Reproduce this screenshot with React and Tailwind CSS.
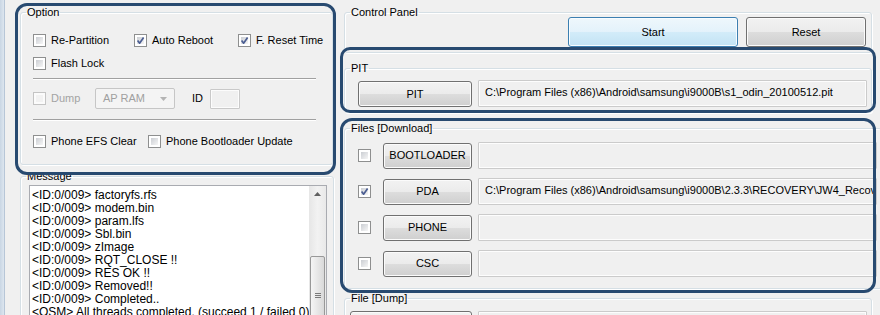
import React from "react";

function Cb({ checked, disabled }) {
  return (
    <span
      className={
        disabled
          ? "relative inline-block w-[13px] h-[13px] shrink-0 border border-[#c4c4c4] bg-[#fbfbfb]"
          : "relative inline-block w-[13px] h-[13px] shrink-0 border border-[#8e8f8f] bg-white"
      }
    >
      <span
        className={
          disabled
            ? "absolute inset-[2px] bg-[#f2f2f2]"
            : "absolute inset-[2px] bg-gradient-to-br from-[#cbced3] to-[#f6f6f6]"
        }
      />
      {checked && (
        <svg className="absolute left-0 top-0" width="11" height="11" viewBox="0 0 11 11">
          <path d="M2.6 5.6 L4.6 8.2 L8.6 2.4" fill="none" stroke="#4b5e92" strokeWidth="1.7" strokeLinejoin="round" />
        </svg>
      )}
    </span>
  );
}

function Check({ label, checked, disabled, className }) {
  return (
    <div className={"flex items-center gap-[5px] " + (className || "")}>
      <Cb checked={checked} disabled={disabled} />
      <span className={disabled ? "text-[#a3a3a3]" : "text-black"}>{label}</span>
    </div>
  );
}

function Btn({ label, className }) {
  return (
    <div
      className={
        "flex items-center justify-center rounded-[3px] border border-[#707070] bg-[linear-gradient(#f2f2f2_0%,#ebebeb_50%,#dddddd_50%,#cfcfcf_100%)] shadow-[inset_0_0_0_1px_#fbfbfb] " +
        (className || "")
      }
    >
      {label}
    </div>
  );
}

function PathBox({ text, className }) {
  return (
    <div
      className={
        "h-[27px] flex-1 rounded-[1px] border border-[#cbcbcb] bg-[#f0f0f0] shadow-[inset_0_0_0_1px_#fdfdfd] pl-[6px] pt-[3px] whitespace-nowrap overflow-hidden " +
        (className || "")
      }
    >
      {text}
    </div>
  );
}

const fs = "border border-[#d5dfe5] rounded-[3px] shadow-[inset_1px_1px_0_#ffffff,1px_1px_0_#ffffff]";
const lg = "ml-[5px] px-[1px] leading-[13px]";

const messages = [
  "<ID:0/009> factoryfs.rfs",
  "<ID:0/009> modem.bin",
  "<ID:0/009> param.lfs",
  "<ID:0/009> Sbl.bin",
  "<ID:0/009> zImage",
  "<ID:0/009> RQT_CLOSE !!",
  "<ID:0/009> RES OK !!",
  "<ID:0/009> Removed!!",
  "<ID:0/009> Completed..",
  "<OSM> All threads completed. (succeed 1 / failed 0)",
];

const files = [
  { label: "BOOTLOADER", checked: false, path: "" },
  { label: "PDA", checked: true, path: "C:\\Program Files (x86)\\Android\\samsung\\i9000B\\2.3.3\\RECOVERY\\JW4_Recov" },
  { label: "PHONE", checked: false, path: "" },
  { label: "CSC", checked: false, path: "" },
];

export default function App() {
  return (
    <div className="relative w-[880px] h-[315px] overflow-hidden bg-[#f0f0f0] flex text-[11px] text-black font-[family-name:'Liberation_Sans',Arial,sans-serif]">
      {/* window edge */}
      <div className="w-[5px] h-full shrink-0 bg-gradient-to-r from-[#c9d6e4] to-[#dde6ef] border-r border-[#b7c6d7]" />

      {/* left column */}
      <div className="ml-[15px] w-[313px] shrink-0 flex flex-col">
        <fieldset className={"mt-[6px] h-[159px] shrink-0 " + fs}>
          <legend className={lg}>Option</legend>
          <div className="mt-[13px] ml-[12px] flex items-center h-[16px]">
            <Check label="Re-Partition" className="w-[101px]" />
            <Check label="Auto Reboot" checked className="w-[104px]" />
            <Check label="F. Reset Time" checked />
          </div>
          <div className="mt-[7px] ml-[12px] flex items-center h-[16px]">
            <Check label="Flash Lock" />
          </div>
          <div className="mt-[7px] ml-[12px] w-[283px] border-t border-b border-t-[#a0a0a0] border-b-white" />
          <div className="mt-[8px] ml-[12px] flex items-center h-[21px]">
            <Check label="Dump" disabled className="w-[62px]" />
            <div className="w-[80px] h-[21px] rounded-[2px] border border-[#c6c6c6] bg-[#f4f4f4] flex items-center pl-[7px] text-[#a0a0a0]">
              <span className="flex-1">AP RAM</span>
              <svg className="mr-[7px]" width="7" height="4" viewBox="0 0 7 4">
                <path d="M0 0 L7 0 L3.5 4 Z" fill="#b4b4b4" />
              </svg>
            </div>
            <span className="ml-[17px]">ID</span>
            <div className="ml-[7px] w-[30px] h-[20px] rounded-[1px] border border-[#c9c9c9] bg-[#f0f0f0] shadow-[inset_0_0_0_1px_#fcfcfc]" />
          </div>
          <div className="mt-[10px] ml-[12px] w-[283px] border-t border-b border-t-[#a0a0a0] border-b-white" />
          <div className="mt-[12px] ml-[12px] flex items-center h-[16px]">
            <Check label="Phone EFS Clear" className="w-[115px]" />
            <Check label="Phone Bootloader Update" />
          </div>
        </fieldset>

        <fieldset className={"mt-[5px] h-[200px] shrink-0 " + fs}>
          <legend className={lg}>Message</legend>
          <div className="mt-[2px] ml-[8px] mr-[6px] h-[150px] border border-[#a9abb1] bg-white flex">
            <div className="flex-1 pl-[2px] pt-[3px] text-[12px] leading-[13px] whitespace-nowrap overflow-hidden">
              {messages.map((m, i) => (
                <div key={i}>{m}</div>
              ))}
            </div>
            <div className="w-[17px] shrink-0 bg-gradient-to-r from-[#e6e6e6] via-[#f2f2f2] to-[#e9e9e9] flex flex-col">
              <div className="h-[17px] flex items-center justify-center">
                <svg width="7" height="4" viewBox="0 0 7 4">
                  <path d="M3.5 0 L7 4 L0 4 Z" fill="#606060" />
                </svg>
              </div>
              <div className="mt-[54px] ml-[1px] w-[15px] h-[80px] rounded-[2px] border border-[#989898] bg-gradient-to-r from-[#f5f5f5] to-[#d9d9d9] flex flex-col items-center">
                <div className="mt-[36px] flex flex-col gap-[1px]">
                  <div className="w-[6px] h-[1px] bg-[#7a7a7a]" />
                  <div className="w-[6px] h-[1px] bg-[#7a7a7a]" />
                  <div className="w-[6px] h-[1px] bg-[#7a7a7a]" />
                </div>
              </div>
            </div>
          </div>
        </fieldset>
      </div>

      {/* right column */}
      <div className="ml-[11px] w-[528px] shrink-0 flex flex-col">
        <fieldset className={"mt-[6px] h-[47px] shrink-0 " + fs}>
          <legend className={lg}>Control Panel</legend>
          <div className="-mt-[2px] flex justify-end gap-[8px] pr-[5px]">
            <div className="w-[170px] h-[30px] flex items-center justify-center rounded-[3px] border border-[#3c7fb1] bg-[linear-gradient(#eef7fc_0%,#e3f2fb_50%,#d3ecf9_50%,#c2e3f4_100%)] shadow-[inset_0_0_0_1px_#f7fcff]">
              Start
            </div>
            <Btn label="Reset" className="w-[120px] h-[30px]" />
          </div>
        </fieldset>

        <fieldset className={"mt-[9px] h-[51px] shrink-0 " + fs}>
          <legend className={lg}>PIT</legend>
          <div className="mt-[5px] flex items-start pl-[13px] pr-[4px]">
            <Btn label="PIT" className="mt-[1px] w-[114px] h-[26px]" />
            <PathBox className="ml-[6px]" text="C:\Program Files (x86)\Android\samsung\i9000B\s1_odin_20100512.pit" />
          </div>
        </fieldset>

        <fieldset className={"mt-[9px] h-[167px] shrink-0 " + fs}>
          <legend className={lg}>Files [Download]</legend>
          <div className="mt-[7px] flex flex-col gap-[9px]">
            {files.map((f) => (
              <div key={f.label} className="h-[27px] flex items-center pl-[13px] pr-[4px]">
                <Cb checked={f.checked} />
                <Btn label={f.label} className="ml-[12px] w-[89px] h-[26px]" />
                <PathBox className="ml-[6px]" text={f.path} />
              </div>
            ))}
          </div>
        </fieldset>

        <fieldset className={"mt-[3px] h-[60px] shrink-0 " + fs}>
          <legend className={lg}>File [Dump]</legend>
          <div className="mt-[6px] flex items-start pl-[5px] pr-[4px]">
            <Btn label="" className="w-[122px] h-[26px]" />
            <PathBox className="ml-[6px]" text="" />
          </div>
        </fieldset>
      </div>

      {/* highlight annotations */}
      <div className="absolute left-[15px] top-[3px] w-[321px] h-[172px] rounded-[12px] border-[3px] border-[#284a70] pointer-events-none" />
      <div className="absolute left-[340px] top-[47px] w-[536px] h-[66px] rounded-[10px] border-[3px] border-[#284a70] pointer-events-none" />
      <div className="absolute left-[340px] top-[118px] w-[536px] h-[175px] rounded-[12px] border-[3px] border-[#284a70] pointer-events-none" />
    </div>
  );
}
